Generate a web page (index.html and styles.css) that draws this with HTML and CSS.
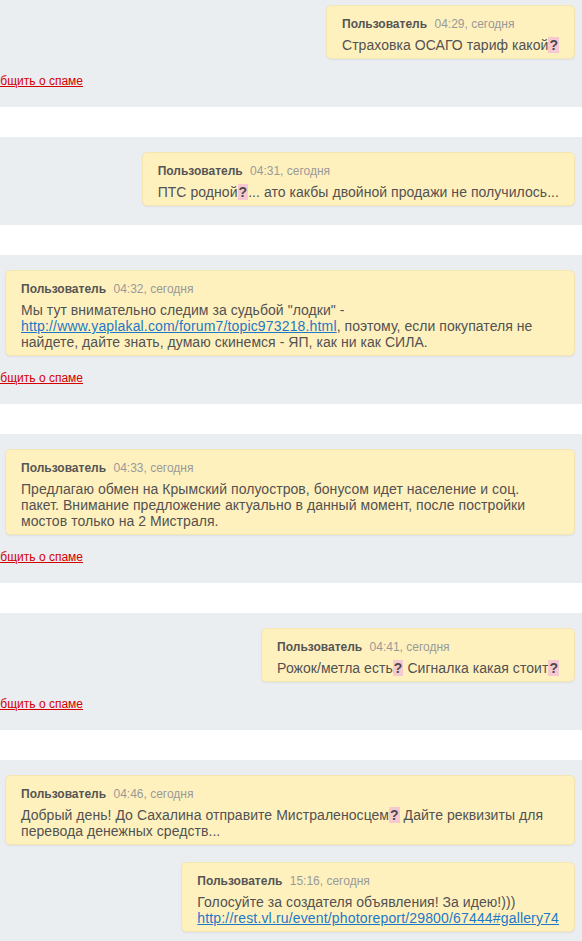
FILE: index.html
```html
<!DOCTYPE html>
<html lang="ru">
<head>
    <meta charset="UTF-8">
    <meta name="viewport" content="width=device-width, initial-scale=1.0">
    <title>Комментарии</title>
    <link rel="stylesheet" href="styles.css">
</head>
<body>
    <div class="thread">
        <div class="item item-first">
            <div class="bubble">
                <div class="meta"><span class="author">Пользователь</span> <span class="time">04:29, сегодня</span></div>
                <div class="text">Страховка ОСАГО тариф какой<b class="q">?</b></div>
            </div>
            <div class="spam"><a href="#">Сообщить о спаме</a></div>
        </div>

        <div class="item">
            <div class="bubble">
                <div class="meta"><span class="author">Пользователь</span> <span class="time">04:31, сегодня</span></div>
                <div class="text">ПТС родной<b class="q">?</b>... ато какбы двойной продажи не получилось...</div>
            </div>
        </div>

        <div class="item">
            <div class="bubble">
                <div class="meta"><span class="author">Пользователь</span> <span class="time">04:32, сегодня</span></div>
                <div class="text">Мы тут внимательно следим за судьбой "лодки" - <a href="#">http://www.yaplakal.com/forum7/topic973218.html</a>, поэтому, если покупателя не найдете, дайте знать, думаю скинемся - ЯП, как ни как СИЛА.</div>
            </div>
            <div class="spam"><a href="#">Сообщить о спаме</a></div>
        </div>

        <div class="item">
            <div class="bubble">
                <div class="meta"><span class="author">Пользователь</span> <span class="time">04:33, сегодня</span></div>
                <div class="text">Предлагаю обмен на Крымский полуостров, бонусом идет население и соц. пакет. Внимание предложение актуально в данный момент, после постройки мостов только на 2 Мистраля.</div>
            </div>
            <div class="spam"><a href="#">Сообщить о спаме</a></div>
        </div>

        <div class="item">
            <div class="bubble">
                <div class="meta"><span class="author">Пользователь</span> <span class="time">04:41, сегодня</span></div>
                <div class="text">Рожок/метла есть<b class="q">?</b> Сигналка какая стоит<b class="q">?</b></div>
            </div>
            <div class="spam"><a href="#">Сообщить о спаме</a></div>
        </div>

        <div class="item">
            <div class="bubble">
                <div class="meta"><span class="author">Пользователь</span> <span class="time">04:46, сегодня</span></div>
                <div class="text">Добрый день! До Сахалина отправите Мистраленосцем<b class="q">?</b> Дайте реквизиты для перевода денежных средств...</div>
            </div>
            <div class="bubble">
                <div class="meta"><span class="author">Пользователь</span> <span class="time">15:16, сегодня</span></div>
                <div class="text">Голосуйте за создателя объявления! За идею!)))<br><a href="#">http://rest.vl.ru/event/photoreport/29800/67444#gallery74</a></div>
            </div>
        </div>
    </div>
</body>
</html>
```

FILE: styles.css
```css
body {
    margin: 0;
    font-family: "Liberation Sans", Arial, sans-serif;
    background-color: #fff;
    color: #555;
    overflow: hidden;
}
.thread {
    display: flex;
    flex-direction: column;
    gap: 30px;
}
.item {
    background-color: #eaeef0;
    padding: 15px 7px 19px 5px;
    display: flex;
    flex-direction: column;
    align-items: flex-end;
    gap: 17px;
}
.item-first {
    padding-top: 5px;
}
.bubble {
    background-color: #fff1be;
    border: 1px solid #f4e6b2;
    border-radius: 5px;
    box-shadow: 0 1px 2px rgba(0, 0, 0, 0.06);
    padding: 10px 15px 5px;
    max-width: 100%;
    box-sizing: border-box;
}
.meta {
    font-size: 12px;
    line-height: 16px;
    margin-bottom: 5px;
}
.author {
    font-weight: bold;
    color: #555;
}
.time {
    color: #999;
    margin-left: 4px;
}
.text {
    font-size: 14px;
    line-height: 16px;
    color: #525252;
    letter-spacing: 0.05px;
}
.text a {
    color: #1d78c9;
    letter-spacing: 0.16px;
}
.q {
    background-color: #f6c9d0;
    color: #4a4a4a;
    padding: 0 1px;
}
/* the row is cut at the left edge of the page, only its end is visible */
.spam {
    align-self: flex-start;
    display: flex;
    justify-content: flex-end;
    width: 78px;
    white-space: nowrap;
    font-size: 12px;
    line-height: 15px;
    margin: -2px 0 -1px;
}
.spam a {
    color: #d40000;
}
```
